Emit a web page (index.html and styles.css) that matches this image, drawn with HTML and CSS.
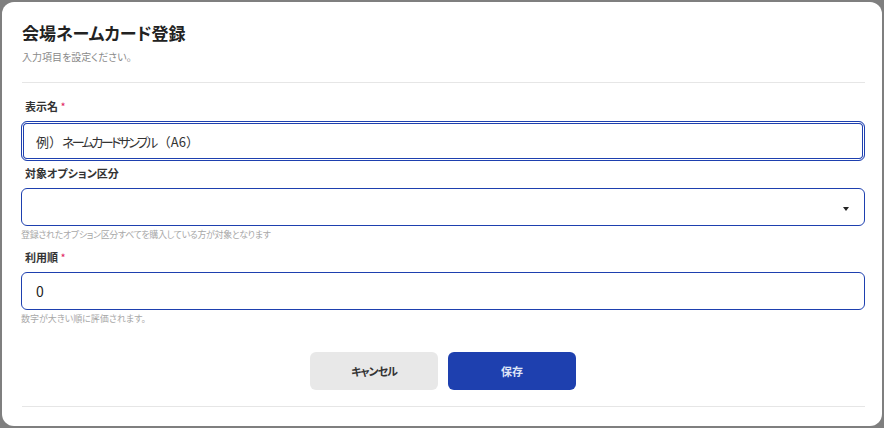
FILE: index.html
```html
<!DOCTYPE html>
<html lang="ja">
<head>
<meta charset="utf-8">
<title>会場ネームカード登録</title>
<link rel="stylesheet" href="styles.css">
</head>
<body>
<div class="backdrop">
  <div class="modal">
    <header class="modal-header">
      <h1 class="title">会場ネームカード登録</h1>
      <p class="subtitle">入力項目を設定ください。</p>
    </header>
    <div class="divider"></div>
    <form class="form">
      <div class="field">
        <label class="label">表示名 <span class="req">*</span></label>
        <div class="input focused"><span class="placeholder"><span class="full">例）</span><span class="kana">ネームカードサンプル</span><span class="full">（</span>A6<span class="full">）</span></span></div>
      </div>
      <div class="field field-2">
        <label class="label">対象オプション区分</label>
        <div class="input select">
          <svg class="caret" width="6" height="4" viewBox="0 0 6 4"><path d="M0 0H6L3 4Z" fill="#222"/></svg>
        </div>
        <p class="hint hint-long">登録されたオプション区分すべてを購入している方が対象となります</p>
      </div>
      <div class="field field-3">
        <label class="label">利用順 <span class="req">*</span></label>
        <div class="input"><span class="value">0</span></div>
        <p class="hint">数字が大きい順に評価されます。</p>
      </div>
      <div class="actions">
        <button type="button" class="btn btn-cancel">キャンセル</button>
        <button type="button" class="btn btn-save">保存</button>
      </div>
    </form>
    <div class="divider"></div>
  </div>
</div>
</body>
</html>
```

FILE: styles.css
```css
* { box-sizing: border-box; }
html, body { margin: 0; padding: 0; }
body {
  background: #7f7f7f;
  font-family: "Noto Sans CJK JP", "Noto Sans", sans-serif;
  font-feature-settings: "palt";
  color: #222;
}
.backdrop {
  width: 884px;
  height: 428px;
  padding: 2px;
}
.modal {
  background: #fff;
  border-radius: 12px;
  height: 424px;
  padding: 0 17px 0 19px;
  overflow: hidden;
}
.modal-header {
  padding-top: 19px;
  padding-left: 1px;
}
.title {
  margin: 0;
  font-size: 17px;
  line-height: 24px;
  font-weight: 700;
  color: #222;
}
.subtitle {
  margin: 5px 0 0;
  font-size: 10px;
  line-height: 14px;
  color: #8a8a8a;
}
.divider {
  height: 1px;
  background: #e6e6e6;
  margin-left: 1px;
}
.modal-header + .divider { margin-top: 18px; }
.form {
  padding-top: 15px;
  display: flex;
  flex-direction: column;
}
.field { display: flex; flex-direction: column; }
.field-2 { margin-top: 4px; }
.field-3 { margin-top: 8px; }
.label {
  font-size: 11px;
  line-height: 16px;
  font-weight: 700;
  color: #333;
  padding-left: 4px;
  margin-bottom: 7px;
}
.req { color: #e0245e; font-weight: 400; }
.input {
  height: 38px;
  border: 1px solid #1e40af;
  border-radius: 6px;
  display: flex;
  align-items: center;
  padding: 0 14px;
  font-size: 13px;
}
.input.focused {
  height: 40px;
  box-shadow: inset 0 0 0 1px #fff, inset 0 0 0 2px #1e40af;
}
.placeholder { color: #333; font-size: 13px; white-space: nowrap; }
.placeholder .full { font-feature-settings: normal; }
.placeholder .kana { letter-spacing: -2.6px; margin-right: 2px; }
.value { color: #222; font-size: 14px; }
.select { justify-content: flex-end; padding-right: 15px; }
.caret { display: block; margin-top: 3px; }
.hint {
  margin: 3px 0 0;
  font-size: 9px;
  line-height: 12px;
  color: #a8a8a8;
}
.hint-long { letter-spacing: -0.35px; }
.actions {
  display: flex;
  justify-content: center;
  gap: 10px;
  margin-top: 27px;
  margin-bottom: 16px;
}
.btn {
  width: 128px;
  height: 38px;
  border: none;
  border-radius: 6px;
  font-family: inherit;
  font-feature-settings: "palt";
  font-size: 11px;
  font-weight: 700;
}
.btn-cancel { background: #e8e8e8; color: #333; letter-spacing: -1px; }
.btn-save { background: #1e40af; color: #dfe5f7; }
```
